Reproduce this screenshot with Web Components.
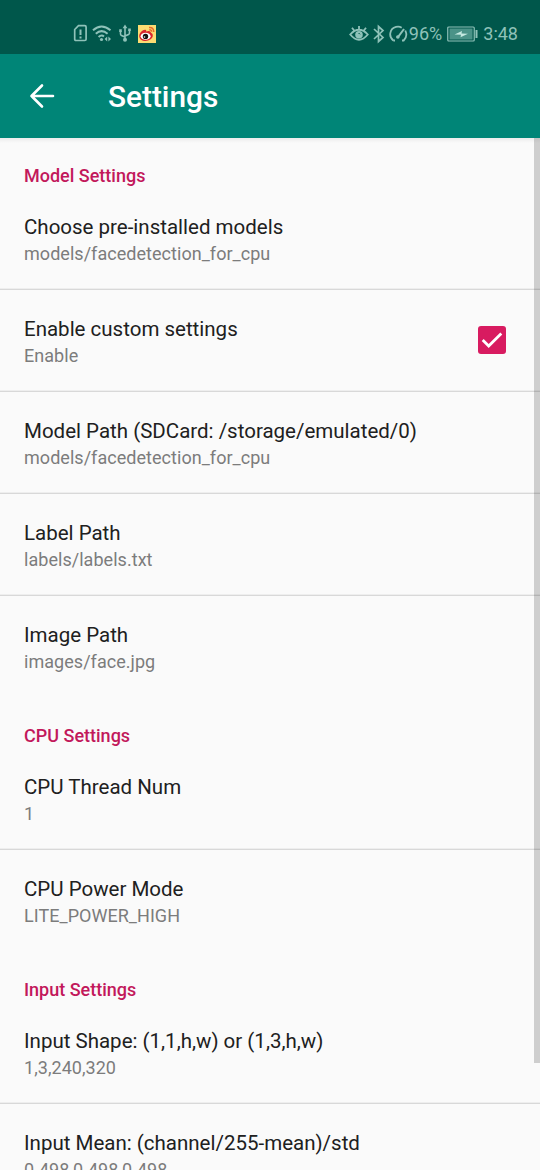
<!DOCTYPE html>
<html lang="en">
<head>
<meta charset="utf-8">
<title>Settings</title>
<style>
html,body{margin:0;height:100%;overflow:hidden;background:#fafafa;font-family:Roboto,"Liberation Sans",sans-serif}
</style>
</head>
<body>
<settings-screen></settings-screen>
<script>
const define = (name, html) => customElements.define(name, class extends HTMLElement {
  constructor() {
    super();
    const t = document.createElement('template');
    t.innerHTML = html;
    this.attachShadow({mode: 'open'}).append(t.content.cloneNode(true));
  }
});

define('status-bar', `
<style>
:host{display:flex;height:54px;box-sizing:border-box;padding:13px 22px 0 73px;background:#00574b;color:#8fc2b9;align-items:flex-start;justify-content:space-between;font-size:18px;line-height:42px}
.g{display:flex;align-items:center;height:41px}
svg{display:block;fill:none;stroke:currentColor;stroke-width:1.5;flex:none}
</style>
<div class="g">
  <svg width="15" height="20" viewBox="0 0 15 20"><path d="M5.500 1.700h6.300q1.300 0 1.300 1.300v12.200q0 1.300-1.300 1.300H3q-1.300 0-1.300-1.300V5.500Z" stroke-width="1.700"/><path d="M7.500 5.500V11M7.500 12.500v2" stroke-width="2"/></svg>
  <svg width="22" height="20" viewBox="0 0 22 20" style="margin-left:4px"><path d="M1 6.300Q9.500-1.300 18.500 6.300M3.800 9.700Q9.500 4.500 15.600 9.700M6.600 13Q9.500 10.300 12 12.400" stroke-width="2"/><circle cx="9.500" cy="15.500" r="1.600" fill="currentColor" stroke="none"/><path d="m15.200 12.500-2.600 2.500 2.600 2.500zM16.400 12.500l2.600 2.500-2.600 2.500z" fill="currentColor" stroke="none"/></svg>
  <svg width="14" height="20" viewBox="0 0 14 20" style="margin-left:4px" stroke-linejoin="round"><path d="M7 3v12M2.500 7v3q0 1 1 1.400L7 13M11.500 6v3q0 1-1 1.400L7 12" stroke-width="1.600"/><path d="m7 .5 2.400 3.800H4.600zM1.200 5.300h2.600v2.600H1.200zM10.200 4.500h2.600v2.600h-2.600z" fill="currentColor" stroke="none"/><circle cx="7" cy="15.700" r="2" fill="currentColor" stroke="none"/></svg>
  <svg width="18" height="18" viewBox="0 0 18 18" style="margin-left:6px" stroke="none"><path fill="#fbdc72" stroke="none" d="M0 0h18v18H0z"/><path fill="#d9272d" stroke="none" d="M1.200 11C1.200 8 5 4.200 7.500 4.800q1 .3.700 1.800Q12.500 5 13 7.800q2.300.8 1.800 3.300C14.300 14 11 16 7.500 16s-6.300-2-6.300-5Z"/><ellipse cx="7.600" cy="11.300" rx="5" ry="3.500" fill="#fff" stroke="none"/><circle cx="7.500" cy="11.400" r="2.700" fill="#171313" stroke="none"/><circle cx="6.500" cy="12" r=".8" fill="#fff" stroke="none"/><path d="M11 2.500q4.700-.5 4.800 4.500" stroke="#e66b2d" stroke-width="1.400"/><path d="M11.300 4.700q2.300-.1 2.500 2" stroke="#e66b2d"/></svg>
</div>
<div class="g">
  <svg width="20" height="18" viewBox="0 0 20 18"><path d="M1.200 9.500Q10 0 18.800 9.500 10 20 1.200 9.500ZM10 4.700V1M5.500 6 3 2.700M14.500 6 17 2.700" stroke-width="1.800"/><circle cx="10" cy="9.700" r="3.800" fill="currentColor" stroke="none"/><path d="M9.500 8.500a1.300 1.300 0 0 1 1.600.8" stroke="#00574b" stroke-width=".9"/></svg>
  <svg width="14" height="20" viewBox="0 0 14 20" style="margin-left:3px"><path d="m2 5 9 8.500-4.500 4v-15L11 6.500 2 15" stroke-width="1.700"/></svg>
  <svg width="19" height="18" viewBox="0 0 19 18" style="margin-left:3px"><path d="M4.300 15.500C-.8 11.500.7 3.500 7 1.900q3.200-.8 5.700.8M16.300 5.500Q19 11.500 14.700 15.500H13M4.300 15.500H6" stroke-width="1.800"/><path d="m15 4-6.400 8.700" stroke-width="2"/><circle cx="8.800" cy="12" r="1.800" fill="currentColor" stroke="none"/></svg>
  <span style="margin-left:1px">96%</span>
  <svg width="32" height="16" viewBox="0 0 32 16" style="margin-left:5px"><rect x=".75" y="1" width="26.500" height="14" rx="1" stroke-width="1.200"/><path d="M2.500 2.500h23v11h-23z" fill="#4b9388" stroke="none"/><path d="m7.500 8.500 7.500-3.500-.5 2.500 6.500.3-7.500 3.500.5-2.500z" fill="#c5e9e1" stroke="none"/><path d="M29.500 4v8" stroke-width="2"/></svg>
  <span style="margin-left:4px">3:48</span>
</div>`);

define('app-bar', `
<style>
:host{display:flex;height:84px;background:#008577;color:#fff;align-items:center;padding-left:28px}
svg{display:block;margin-right:52px}
h1{margin:0;font-size:29.800px;font-weight:500;line-height:36px;padding-top:1px}
</style>
<svg width="28" height="28" viewBox="0 0 28 28" fill="none" stroke="#fff" stroke-width="2.600" stroke-linecap="round" stroke-linejoin="round"><path d="M25 14H3.500M14 3.500 3.500 14 14 24.500"/></svg>
<h1><slot></slot></h1>`);

define('settings-category', `
<style>
:host{display:block}
h2{margin:0;box-sizing:border-box;height:50px;padding:26px 24px 0;font-size:18px;line-height:24px;font-weight:500;color:#c2185b}
</style>
<h2><slot name="heading"></slot></h2><slot></slot>`);

define('settings-row', `
<style>
:host{display:flex;height:102px;box-sizing:border-box;padding:0 34px 1px 24px;align-items:center;justify-content:space-between;border-bottom:1px solid #d8d8d8;box-shadow:inset 0 -1px #eee}
:host(:last-child){border-bottom-color:transparent;box-shadow:none}
.x{padding-top:2px}
.t{font-size:20.500px;line-height:28px;color:#202020;white-space:nowrap}
.s{font-size:18px;line-height:24px;color:#7c7c7c;white-space:nowrap;letter-spacing:.04px;padding-top:1px}
</style>
<div class="x"><div class="t"><slot></slot></div><div class="s"><slot name="summary"></slot></div></div>
<slot name="widget"></slot>`);

define('check-box', `
<style>:host{display:block;padding-bottom:1px}svg{display:block}</style>
<svg width="28" height="28" viewBox="0 0 28 28"><rect width="28" height="28" rx="3" fill="#d81b60"/><path d="m4.700 14 6 6L23.300 7.400" fill="none" stroke="#fff" stroke-width="2.800"/></svg>`);

define('settings-screen', `
<style>
:host{display:flex;flex-direction:column;height:100vh;overflow:hidden}
status-bar,app-bar{flex:none}
main{position:relative;flex:1;min-height:0;overflow:hidden;background:linear-gradient(#ececec,#fafafa 5px)}
.bar{position:absolute;right:0;top:0;width:6px;height:925px;background:rgba(0,0,0,.175)}
</style>
<status-bar></status-bar>
<app-bar>Settings</app-bar>
<main>
<settings-category><span slot="heading">Model Settings</span>
<settings-row>Choose pre-installed models<span slot="summary">models/facedetection_for_cpu</span></settings-row>
<settings-row>Enable custom settings<span slot="summary">Enable</span><check-box slot="widget"></check-box></settings-row>
<settings-row>Model Path (SDCard: /storage/emulated/0)<span slot="summary">models/facedetection_for_cpu</span></settings-row>
<settings-row>Label Path<span slot="summary">labels/labels.txt</span></settings-row>
<settings-row>Image Path<span slot="summary">images/face.jpg</span></settings-row>
</settings-category>
<settings-category><span slot="heading">CPU Settings</span>
<settings-row>CPU Thread Num<span slot="summary">1</span></settings-row>
<settings-row>CPU Power Mode<span slot="summary">LITE_POWER_HIGH</span></settings-row>
</settings-category>
<settings-category><span slot="heading">Input Settings</span>
<settings-row>Input Shape: (1,1,h,w) or (1,3,h,w)<span slot="summary">1,3,240,320</span></settings-row>
<settings-row>Input Mean: (channel/255-mean)/std<span slot="summary">0.498,0.498,0.498</span></settings-row>
</settings-category>
<div class="bar"></div>
</main>`);
</script>
</body>
</html>
